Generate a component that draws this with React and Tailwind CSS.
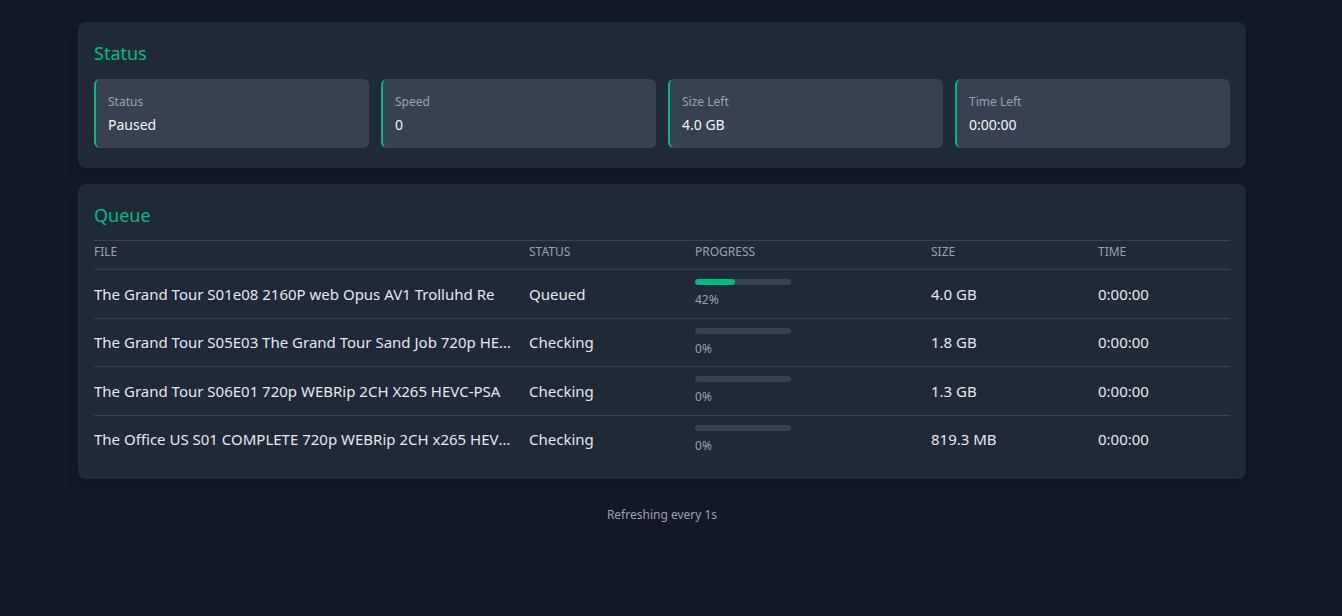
import React from "react";

const stats = [
    { label: "Status", value: "Paused" },
    { label: "Speed", value: "0" },
    { label: "Size Left", value: "4.0 GB" },
    { label: "Time Left", value: "0:00:00" },
];

const queue = [
    { file: "The Grand Tour S01e08 2160P web Opus AV1 Trolluhd Re", status: "Queued", progress: 42, size: "4.0 GB", time: "0:00:00" },
    { file: "The Grand Tour S05E03 The Grand Tour Sand Job 720p HEVC x265-MeGusta", status: "Checking", progress: 0, size: "1.8 GB", time: "0:00:00" },
    { file: "The Grand Tour S06E01 720p WEBRip 2CH X265 HEVC-PSA", status: "Checking", progress: 0, size: "1.3 GB", time: "0:00:00" },
    { file: "The Office US S01 COMPLETE 720p WEBRip 2CH x265 HEVC-PSA", status: "Checking", progress: 0, size: "819.3 MB", time: "0:00:00" },
];

export default function App() {
    return (
        <div
            className="min-h-screen bg-[#111827] text-gray-100 pt-[22px]"
            style={{ fontFamily: '"Noto Sans", "Open Sans", sans-serif' }}
        >
            <div className="ml-[78px] w-[1168px] space-y-4">
                {/* status */}
                <div className="bg-[#1f2937] rounded-lg px-4 pt-4 pb-5 shadow-lg">
                    <h2 className="text-emerald-500 text-lg leading-6 mt-[3px] mb-[14px]">Status</h2>
                    <div className="grid grid-cols-4 gap-3">
                        {stats.map(s => (
                            <div key={s.label} className="bg-[#374151] rounded-md border-l-2 border-emerald-500 pl-3 pt-[15px] h-[69px]">
                                <div className="text-xs text-gray-400 leading-4">{s.label}</div>
                                <div className="text-sm text-gray-100 leading-5 mt-[5px]">{s.value}</div>
                            </div>
                        ))}
                    </div>
                </div>

                {/* queue */}
                <div className="bg-[#1f2937] rounded-lg px-4 pt-4 pb-[15px] shadow-lg">
                    <h2 className="text-emerald-500 text-lg leading-6 mt-[3px] mb-[13px]">Queue</h2>
                    <table className="w-full text-left table-fixed border-t border-[#374151]">
                        <thead>
                            <tr className="border-b border-[#374151]">
                                <th className="w-[435px] pt-[3px] pb-[9px] text-xs leading-4 font-normal text-gray-400 uppercase">File</th>
                                <th className="w-[166px] pt-[3px] pb-[9px] text-xs leading-4 font-normal text-gray-400 uppercase">Status</th>
                                <th className="w-[236px] pt-[3px] pb-[9px] text-xs leading-4 font-normal text-gray-400 uppercase">Progress</th>
                                <th className="w-[167px] pt-[3px] pb-[9px] text-xs leading-4 font-normal text-gray-400 uppercase">Size</th>
                                <th className="pt-[3px] pb-[9px] text-xs leading-4 font-normal text-gray-400 uppercase">Time</th>
                            </tr>
                        </thead>
                        <tbody>
                            {queue.map((q, i) => (
                                <tr key={i} className={i < queue.length - 1 ? "border-b border-[#374151]" : ""}>
                                    <td className="h-[48.5px] pr-3 text-[15px] text-gray-200">
                                        <div className="truncate">{q.file}</div>
                                    </td>
                                    <td className="text-[15px] text-gray-200">{q.status}</td>
                                    <td>
                                        <div className="w-24 h-1.5 bg-[#374151] rounded-full overflow-hidden">
                                            <div className="h-full bg-emerald-500 rounded-full" style={{ width: `${q.progress}%` }} />
                                        </div>
                                        <div className="text-xs leading-4 text-gray-400 mt-[7px]">{q.progress}%</div>
                                    </td>
                                    <td className="text-[15px] text-gray-200">{q.size}</td>
                                    <td className="text-[15px] text-gray-200">{q.time}</td>
                                </tr>
                            ))}
                        </tbody>
                    </table>
                </div>

                <p className="text-center text-xs text-gray-400 pt-[12px]">Refreshing every 1s</p>
            </div>
        </div>
    );
}
